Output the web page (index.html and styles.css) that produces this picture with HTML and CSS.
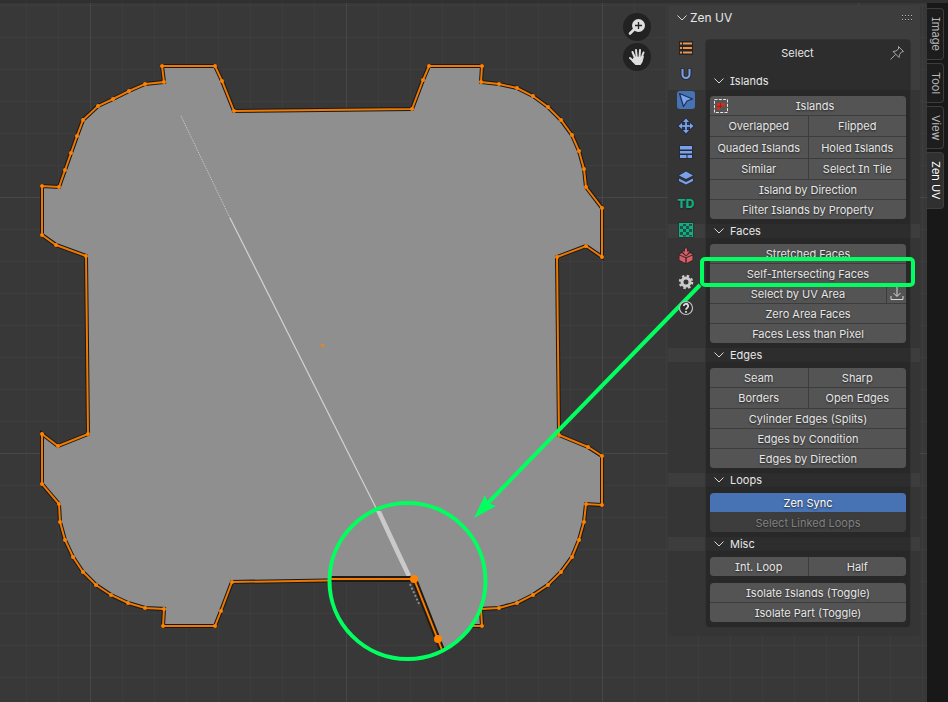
FILE: index.html
```
<!DOCTYPE html>
<html lang="en">
<head>
<meta charset="utf-8">
<title>Zen UV</title>
<link rel="stylesheet" href="styles.css">
</head>
<body>
<main class="editor">
  <svg class="canvas" width="948" height="702" viewBox="0 0 948 702" aria-hidden="true">
    <defs>
      <pattern id="minor" width="32" height="32" x="26" y="5" patternUnits="userSpaceOnUse">
        <path d="M.5 0V32M0 .5H32" stroke="#3d3d3d"/>
      </pattern>
      <pattern id="major" width="256" height="256" x="90" y="197" patternUnits="userSpaceOnUse">
        <path d="M.5 0V256M0 .5H256" stroke="#474747"/>
      </pattern>
      <path id="outline" d="M162 66H215L222 81L234 111L412 109L423 80L429 66H482L481 82L499 84L517 88L533 96L548 107L561 120L572 135L579 151L584 169L586 187L602 208V257L586 246L557 257L559 435L588 447L602 456V505L586 504L584 522L579 540L572 557L561 572L548 585L533 595L517 603L499 608L481 609L482 626H448L438 640L414 579L232 582L221 611L215 626H163L164 609L145 608L128 603L111 595L96 585L83 572L73 557L65 540L60 522L59 504L42 484V434L58 446L88 434L86 256L56 245L42 235V186L59 187L65 170L71 153L77 136L83 120L98 106L113 99L129 91L145 84L164 82Z"/>
    </defs>
    <rect width="948" height="702" fill="url(#minor)"/>
    <rect width="948" height="702" fill="url(#major)"/>
    <use href="#outline" fill="#8f8f8f" stroke="#191919" stroke-width="4"/>
    <use href="#outline" fill="none" stroke="#ee7800" stroke-width="2"/>
    <g fill="none" stroke="#ff8200" stroke-width="4" stroke-linecap="round">
      <path d="M162 66h0M215 66h0M222 81h0M234 111h0M412 109h0M423 80h0M429 66h0M482 66h0M481 82h0M499 84h0M517 88h0M533 96h0M548 107h0M561 120h0M572 135h0M579 151h0M584 169h0M586 187h0M602 208h0M602 257h0M586 246h0M557 257h0M559 435h0M588 447h0M602 456h0M602 505h0M586 504h0M584 522h0M579 540h0M572 557h0M561 572h0M548 585h0M533 595h0M517 603h0M499 608h0M482 626h0M232 582h0M221 611h0M215 626h0M163 626h0M164 609h0M145 608h0M128 603h0M111 595h0M96 585h0M83 572h0M73 557h0M65 540h0M60 522h0M59 504h0M42 484h0M42 434h0M58 446h0M88 434h0M86 256h0M56 245h0M42 235h0M42 186h0M59 187h0M65 170h0M71 153h0M77 136h0M83 120h0M98 106h0M113 99h0M129 91h0M145 84h0M164 82h0"/>
    </g>
    <path d="M321 345.500h3" stroke="#e88420" stroke-width="3"/>
    <path d="M181 116L230 218" stroke="#cfcfcf" stroke-dasharray="1 1"/>
    <path d="M230 218L377 510" stroke="#d2d2d2" stroke-width="1.200"/>
    <path d="M376 511L381 511L411 575L407 577L395 552Z" fill="#cacaca"/>
    <clipPath id="lens"><circle cx="408" cy="581" r="77"/></clipPath>
    <g clip-path="url(#lens)">
      <path d="M330 579H414L443 652L390 670H320Z" fill="#383838"/>
      <path d="M346.500 579v80M378.500 579v80M330 613.500h95M330 645.500h108" stroke="#3e3e3e"/>
      <path d="M414 579L443 652L486 652V579Z" fill="#8f8f8f"/>
      <path d="M330 579H414L442 650" fill="none" stroke="#211b14" stroke-width="6"/>
      <path d="M410 584L420 606" fill="none" stroke="#8a8a8a" stroke-width="2" stroke-dasharray="2 2"/>
      <path d="M330 579H414L442 650" fill="none" stroke="#f57c00" stroke-width="2"/>
      <path d="M414 579h.1M438 639h.1" stroke="#ff8200" stroke-width="8" stroke-linecap="round"/>
    </g>
  </svg>

  <div class="viewport">
    <div class="gizmos">
      <button class="gizmo" aria-label="Zoom"><svg width="28" height="28" viewBox="0 0 28 28"><path d="M7 20.500L11 16.500" stroke="#dedede" stroke-width="2.600" stroke-linecap="round"/><circle cx="15.500" cy="12.500" r="6.500" fill="#dedede"/><path d="M15.500 9v7M12 12.500h7" stroke="#222" stroke-width="1.300"/></svg></button>
      <button class="gizmo" aria-label="Pan"><svg width="28" height="28" viewBox="0 0 28 28"><path d="M9.500 9l2.500 6M13 7l.8 8M17 7l-.5 8M20.500 9.500L18.500 15M7 15l4 3.500" stroke="#dedede" stroke-width="2" stroke-linecap="round"/><path d="M11 14l8-.5 2-.5-1.500 6-2 3h-5l-4-4z" fill="#dedede"/></svg></button>
    </div>
  </div>

  <aside class="sidebar">
    <header class="panel-title">
      <svg class="chevron" width="10" height="6" viewBox="0 0 10 6"><path d="M.5.5l4.500 4.500L9.500.5"/></svg>
      <h1>Zen UV</h1>
      <svg width="12" height="6" viewBox="0 0 12 6"><path d="M0 .5h12M0 4.500h12" stroke="#b8b8b8" stroke-dasharray="1 2"/><path d="M0 1.500h12M0 5.500h12" stroke="#222" stroke-dasharray="1 2"/></svg>
    </header>
    <div class="panel-body">
      <nav class="modes">
        <button aria-label="Lists"><svg viewBox="0 0 18 18"><path d="M2 2h14v14H2z" fill="#242424"/><path d="M3 3.500h2v2H3zM6 3.500h9v2H6zM3 8h2v2H3zM6 8h9v2H6zM3 12.500h2v2H3zM6 12.500h9v2H6z" fill="#e8924e"/></svg></button>
        <button aria-label="Unwrap"><svg viewBox="0 0 18 18"><path d="M5.500 3.500V9.500a3.500 3.500 0 0 0 7 0V3.500" fill="none" stroke="#272b34" stroke-width="4"/><path d="M5.500 4V9.500a3.500 3.500 0 0 0 7 0V4" fill="none" stroke="#7aa0ea" stroke-width="2"/></svg></button>
        <button class="current" aria-label="Select"><svg viewBox="0 0 18 18"><path d="M2.500 2.500l13 5.500-5.500 2-3.500 5.500z" fill="#7aa4f0" stroke="#1c304f" stroke-width="1.200" stroke-linejoin="round"/></svg></button>
        <button aria-label="Transform"><svg viewBox="0 0 18 18"><g id="move" fill="#7aa0ea" stroke="#252c3b" stroke-width="2" paint-order="stroke"><path d="M8.300 4h1.500v10H8.300zM4 8.300h10v1.500H4z"/><path d="M9 1.500L12 5H6zM9 16.500L12 13H6zM1.500 9L5 6v6zM16.500 9L13 6v6z"/></g><path d="M9 4v10M4 9h10" stroke="#7aa0ea" stroke-width="1.500"/><path d="M9 2.500L11.500 5h-5zM9 15.500L11.500 13h-5zM2.500 9L5 6.500v5zM15.500 9L13 6.500v5z" fill="#7aa0ea"/></svg></button>
        <button aria-label="Layout"><svg viewBox="0 0 18 18"><path d="M2 2h14v14H2z" fill="#242a36"/><path d="M3 3h12v3.500H3zM3 8h12v2.500H3zM3 12h6.500v3H3zM10.500 12H15v3h-4.500z" fill="#7aa0ea"/></svg></button>
        <button aria-label="Stacks"><svg viewBox="0 0 18 18"><path d="M9 2.500L16 6.500 9 10 2 6.500zM2 9.500l7 3.500 7-3.500v2.500l-7 3.500-7-3.500z" fill="#7aa0ea" stroke="#252c3b" stroke-width="1.500" paint-order="stroke"/></svg></button>
        <button class="density">TD</button>
        <button aria-label="Checker"><svg viewBox="0 0 18 18"><path d="M1.500 1.500h15v15h-15z" fill="#1f2f2a"/><path d="M2 2h14v14H2z" fill="#12ad83"/><path d="M3 5h3v3H3zM9 5h3v3H9zM6 3h3v2H6zM12 3h3v2h-3zM6 8h3v3H6zM12 8h3v3h-3zM3 11h3v3H3zM9 11h3v3H9zM6 14h3v1.500H6zM12 14h3v1.500h-3z" fill="#245145"/></svg></button>
        <button aria-label="Pack"><svg viewBox="0 0 18 18"><path d="M2.500 8.500L8.300 11v5l-5.800-3zM15.500 8.500L9.700 11v5l5.800-3zM8 1.500h2v3h2.500L9 8.500 5.500 4.500H8zM2.500 7.500l2.500-1.500 4 3.500 4-3.500 2.500 1.500L9 10.300z" fill="#d95d66" stroke="#33262a" stroke-width="1.500" paint-order="stroke"/></svg></button>
        <button aria-label="Settings"><svg viewBox="0 0 18 18"><circle cx="9" cy="9" r="4" fill="none" stroke="#cbcbcb" stroke-width="3"/><circle cx="9" cy="9" r="6" fill="none" stroke="#cbcbcb" stroke-width="2.500" stroke-dasharray="2.350 2.362"/></svg></button>
        <button aria-label="Help"><svg viewBox="0 0 18 18"><circle cx="9" cy="9" r="6.500" fill="#2c2c2c" stroke="#c4c4c4" stroke-width="1.200"/><path d="M6.800 7a2.200 2.200 0 1 1 3.300 1.900C9.300 9.400 9 9.600 9 10.800M9 12v1.700" fill="none" stroke="#e0e0e0" stroke-width="1.800"/></svg></button>
      </nav>
      <div class="box">
        <div class="box-title"><h2>Select</h2><button class="pin" aria-label="Pin"><svg width="16" height="16" viewBox="0 0 16 16"><path d="M9.500 1.500l5 5-2 .5-2 2.500-.5 3-6-6 3-.5 2.500-2zM6.500 9.500L1.500 14.500" fill="none" stroke="#a6a6a6"/></svg></button></div>
        <section>
          <h3><svg class="chevron" width="10" height="6" viewBox="0 0 10 6"><path d="M.5.5l4.500 4.500L9.500.5"/></svg>Islands</h3>
          <div class="group">
            <button class="with-icon"><svg width="14" height="14" viewBox="0 0 14 14"><path d="M.5.5h13v13H.5z" fill="none" stroke="#e6e6e6" stroke-dasharray="3 1.330"/><path d="M3 4h8v3.500H8V9H6v2H3z" fill="#d42a20"/><path d="M3 7.500h5M6.500 4v5" stroke="#742d29"/></svg><span>Islands</span></button>
            <div class="pair tall"><button>Overlapped</button><button>Flipped</button></div>
            <div class="pair taller"><button>Quaded Islands</button><button>Holed Islands</button></div>
            <div class="pair tall"><button>Similar</button><button>Select In Tile</button></div>
            <button>Island by Direction</button>
            <button>Filter Islands by Property</button>
          </div>
        </section>
        <section>
          <h3><svg class="chevron" width="10" height="6" viewBox="0 0 10 6"><path d="M.5.5l4.500 4.500L9.500.5"/></svg>Faces</h3>
          <div class="group">
            <button>Stretched Faces</button>
            <button>Self-Intersecting Faces</button>
            <div class="split"><button>Select by UV Area</button><button aria-label="Import area"><svg width="14" height="14" viewBox="0 0 14 14"><path d="M7 0v9M3.500 6L7 9.500 10.500 6M1 9v3.500h12V9" fill="none" stroke="#d8d8d8"/></svg></button></div>
            <button>Zero Area Faces</button>
            <button>Faces Less than Pixel</button>
          </div>
        </section>
        <section>
          <h3><svg class="chevron" width="10" height="6" viewBox="0 0 10 6"><path d="M.5.5l4.500 4.500L9.500.5"/></svg>Edges</h3>
          <div class="group">
            <div class="pair"><button>Seam</button><button>Sharp</button></div>
            <div class="pair tall"><button>Borders</button><button>Open Edges</button></div>
            <button>Cylinder Edges (Splits)</button>
            <button>Edges by Condition</button>
            <button>Edges by Direction</button>
          </div>
        </section>
        <section>
          <h3><svg class="chevron" width="10" height="6" viewBox="0 0 10 6"><path d="M.5.5l4.500 4.500L9.500.5"/></svg>Loops</h3>
          <div class="group">
            <button class="active">Zen Sync</button>
            <button disabled>Select Linked Loops</button>
          </div>
        </section>
        <section>
          <h3><svg class="chevron" width="10" height="6" viewBox="0 0 10 6"><path d="M.5.5l4.500 4.500L9.500.5"/></svg>Misc</h3>
          <div class="group">
            <div class="pair"><button>Int. Loop</button><button>Half</button></div>
          </div>
          <div class="group">
            <button>Isolate Islands (Toggle)</button>
            <button>Isolate Part (Toggle)</button>
          </div>
        </section>
      </div>
    </div>
  </aside>

  <nav class="tabs">
    <button>Image</button>
    <button>Tool</button>
    <button>View</button>
    <button class="selected">Zen UV</button>
  </nav>

  <svg class="callout" width="948" height="702" viewBox="0 0 948 702" aria-hidden="true">
    <g fill="none" stroke="#00ff5f" stroke-width="4">
      <rect x="702" y="259" width="211" height="26" rx="3"/>
      <path d="M700 285L487 504"/>
      <circle cx="407.500" cy="581" r="78"/>
    </g>
    <path d="M474 518L485 495L488 503L496 506Z" fill="#00ff5f"/>
  </svg>
</main>
</body>
</html>
```
FILE: styles.css
```
* { box-sizing: border-box; }
body {
  margin: 0;
  background: #383838;
  color: #e6e6e6;
  font: 11px/14px Inter, "Liberation Sans", sans-serif;
  font-feature-settings: "cv08";
}
h1, h2, h3 { margin: 0; font-size: 11px; font-weight: 400; }
button {
  padding: 0;
  border: 0;
  background: none;
  color: inherit;
  font: inherit;
  font-feature-settings: inherit;
  text-shadow: 0 1px 2px #222;
}
svg { display: block; }
.editor {
  position: relative;
  display: flex;
  min-height: 100vh;
  overflow: hidden;
  border-top: 3px solid #303030;
}
.canvas, .callout { position: absolute; top: -3px; left: 0; }
.callout { pointer-events: none; }
.viewport { flex: 1; position: relative; display: flex; justify-content: flex-end; }
.gizmos { display: flex; flex-direction: column; gap: 2px; padding: 10px 17px; }
.gizmo { width: 28px; height: 28px; border-radius: 50%; background: #222; }

.sidebar {
  position: relative;
  flex: none;
  align-self: flex-start;
  width: 252px;
  margin: 2px 7px 0 0;
  padding-bottom: 8px;
  border-radius: 4px;
  background: linear-gradient(#3d3d3d 85px, #353535 85px);
}
.panel-title { display: flex; align-items: center; height: 26px; padding: 0 6px 0 9px; gap: 3px; }
.panel-title h1 { flex: 1; font-size: 12px; }
.chevron { flex: none; fill: none; stroke: #d8d8d8; stroke-width: 1; }
.panel-body { display: flex; padding: 8px 9px 0 9px; }
.modes { position: relative; z-index: 1; display: flex; flex-direction: column; gap: 8px; width: 28px; }
.modes button { width: 18px; height: 18px; border-radius: 3px; }
.modes .current { background: #4772b3; }
.modes .density { color: #12ad83; font-weight: 800; font-size: 12px; }
.box {
  flex: 1;
  border: 1px solid #323232;
  border-radius: 4px;
  background: linear-gradient(#2d2d2d 50px, #282828 50px);
}
.box-title { display: flex; align-items: center; height: 26px; margin-bottom: 8px; padding-right: 5px; }
.box-title h2 { flex: 1; text-align: center; }
section { padding-bottom: 5px; }
section h3 {
  position: relative;
  display: flex;
  align-items: center;
  gap: 6px;
  height: 14px;
  padding-left: 8px;
  background: #2d2d2d;
}
/* Header bands carry on past both sides of the box. */
h3::before, h3::after { content: ""; position: absolute; top: 0; bottom: 0; background: #3d3d3d; }
h3::before { left: -38px; width: 37px; }
h3::after { right: -10px; width: 9px; }
.group { display: grid; gap: 1px; margin: 6px 4px 0; border-radius: 4px; overflow: hidden; background: #3c3c3c; }
.group + .group { margin-top: 7px; }
section:first-of-type .group { margin-top: 8px; }
.group button { height: 19px; background: #545454; }
.pair { display: grid; grid-template-columns: 1fr 1fr; gap: 1px; }
.group .tall button { height: 20px; }
.group .taller button { height: 21px; }
.split { display: grid; grid-template-columns: 1fr 19px; gap: 1px; }
.split svg { margin: 0 auto; }
.group .with-icon { display: flex; align-items: center; padding: 0 4px; }
.with-icon span { flex: 1; }
.group .active { background: #4772b3; color: #fff; }
.group button:disabled { background: #3d3d3d; color: #808080; }

.tabs {
  position: relative;
  flex: none;
  display: flex;
  flex-direction: column;
  gap: 3px;
  width: 21px;
  padding-top: 5px;
  background: #181818;
}
.tabs button {
  width: 17px;
  padding: 8px 0;
  writing-mode: vertical-rl;
  line-height: 15px;
  border: 1px solid #3d3d3d;
  border-left: 0;
  border-radius: 0 4px 4px 0;
  background: #1d1d1d;
  color: #b8b8b8;
}
.tabs .selected { background: #303030; color: #fff; }
```
